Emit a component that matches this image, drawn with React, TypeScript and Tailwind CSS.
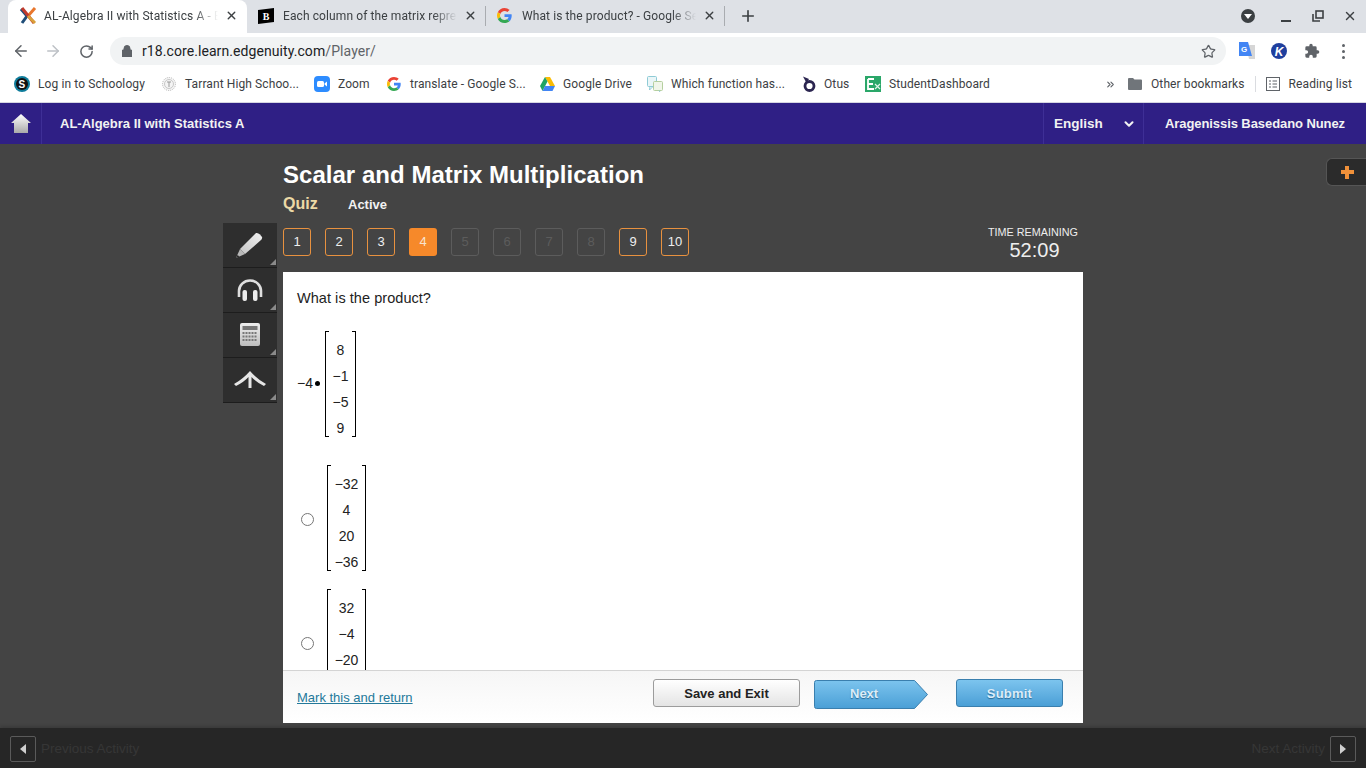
import React from 'react';
import { ArrowLeft, ArrowRight, RotateCw, Star, Plus, X, ChevronDown, ChevronsRight } from 'lucide-react';

const sans = "font-['Liberation_Sans',Arial,sans-serif]";

function EdgenuityIcon() {
  return (
    <svg width="18" height="18" viewBox="0 0 18 18">
      <path d="M2 2 L8 9 L3 16" fill="none" stroke="#1f4e79" strokeWidth="3" />
      <path d="M16 1 L9 9" fill="none" stroke="#e8762c" strokeWidth="3" />
      <path d="M3 1 L15 16" fill="none" stroke="#c0392b" strokeWidth="3" />
      <path d="M9 9 L16 16" fill="none" stroke="#d9a03a" strokeWidth="3" />
    </svg>
  );
}

function BrainlyIcon() {
  return (
    <svg width="16" height="16" viewBox="0 0 16 16">
      <path d="M0 2 L16 0 V14 L0 16 Z" fill="#000" />
      <text x="8" y="12" textAnchor="middle" fontSize="10" fontWeight="700" fill="#fff" fontFamily="Liberation Serif">B</text>
    </svg>
  );
}

function GoogleIcon({ size = 14 }: { size?: number }) {
  return (
    <svg width={size} height={size} viewBox="0 0 48 48">
      <path fill="#EA4335" d="M24 9.5c3.5 0 6.7 1.2 9.2 3.6l6.9-6.9C35.9 2.4 30.4 0 24 0 14.6 0 6.5 5.4 2.6 13.2l8 6.2C12.5 13.7 17.8 9.5 24 9.5z" />
      <path fill="#4285F4" d="M47 24.5c0-1.6-.1-3.100-.4-4.500H24v9h13c-.6 3-2.200 5.500-4.800 7.200l7.700 6C44.400 37.700 47 31.700 47 24.500z" />
      <path fill="#FBBC05" d="M10.500 28.600c-.5-1.400-.8-3-.8-4.600s.3-3.200.8-4.600l-8-6.200C.9 16.500 0 20.100 0 24s.9 7.500 2.600 10.800l7.900-6.200z" />
      <path fill="#34A853" d="M24 48c6.500 0 11.900-2.100 15.900-5.800l-7.700-6c-2.200 1.400-4.900 2.300-8.200 2.300-6.200 0-11.500-4.200-13.400-9.900l-8 6.200C6.500 42.600 14.600 48 24 48z" />
    </svg>
  );
}

function SchoologyIcon() {
  return (
    <svg width="16" height="16" viewBox="0 0 16 16">
      <circle cx="8" cy="8" r="8" fill="#0e7c9b" />
      <circle cx="8" cy="8" r="6" fill="#111" />
      <text x="8" y="11.500" textAnchor="middle" fontSize="10" fontWeight="700" fill="#fff" fontFamily="Liberation Sans">S</text>
    </svg>
  );
}

function TarrantIcon() {
  return (
    <svg width="14" height="14" viewBox="0 0 14 14">
      <circle cx="7" cy="7" r="6.500" fill="#f4f4f4" stroke="#b5b5b5" strokeDasharray="1 1" />
      <circle cx="7" cy="7" r="4.500" fill="none" stroke="#c8c8c8" />
      <path d="M5 5 H9 M7 5 V10" stroke="#999" />
    </svg>
  );
}

function ZoomIcon() {
  return (
    <svg width="16" height="16" viewBox="0 0 16 16">
      <rect width="16" height="16" rx="4" fill="#2d8cff" />
      <rect x="3" y="5" width="7" height="6" rx="1.500" fill="#fff" />
      <path d="M10.500 7.500 L13 5.500 V10.500 L10.500 8.500 Z" fill="#fff" />
    </svg>
  );
}

function DriveIcon() {
  return (
    <svg width="15" height="14" viewBox="0 0 15 14">
      <path d="M5 0 H10 L15 9 H10 Z" fill="#fbbc04" />
      <path d="M5 0 L0 9 L2.500 14 L7.500 4.500 Z" fill="#1fa463" />
      <path d="M5 9 H15 L12.500 14 H2.500 Z" fill="#4285f4" />
    </svg>
  );
}

function WhichIcon() {
  return (
    <svg width="16" height="16" viewBox="0 0 16 16">
      <rect x="0.500" y="0.500" width="9" height="10" rx="1" fill="#eaf6f8" stroke="#8fcbd6" />
      <rect x="6.500" y="5.500" width="9" height="9" rx="1" fill="#f1f6ea" stroke="#b5cf9f" />
      <path d="M3 10.500 L2.500 14 L6 10.500 M12 14.500 L13 16" fill="none" stroke="#8fcbd6" />
    </svg>
  );
}

function OtusIcon() {
  return (
    <svg width="15" height="16" viewBox="0 0 15 16">
      <circle cx="8.500" cy="10" r="4.500" fill="none" stroke="#2b2550" strokeWidth="2.800" />
      <path d="M2 0.500 L8 3 L5.500 7 Z" fill="#2b2550" />
    </svg>
  );
}

function DashboardIcon() {
  return (
    <svg width="16" height="16" viewBox="0 0 16 16">
      <rect width="16" height="16" fill="#2aa769" />
      <path d="M3 3 H9 M3 3 V13 H9 M3 8 H8" fill="none" stroke="#fff" strokeWidth="1.800" />
      <path d="M10 8 L15 13 M15 8 L10 13" stroke="#dff3e8" strokeWidth="1.200" />
    </svg>
  );
}

function FolderIcon() {
  return (
    <svg width="14" height="12" viewBox="0 0 14 12">
      <path d="M0 1 Q0 0 1 0 H5 L6.500 1.500 H13 Q14 1.500 14 2.500 V11 Q14 12 13 12 H1 Q0 12 0 11 Z" fill="#70757a" />
    </svg>
  );
}

function ReadingIcon() {
  return (
    <svg width="14" height="14" viewBox="0 0 14 14" fill="none" stroke="#5f6368">
      <rect x="0.500" y="0.500" width="13" height="13" />
      <path d="M3 4 H5 M6.500 4 H11 M3 7 H5 M6.500 7 H11 M3 10 H5 M6.500 10 H11" />
    </svg>
  );
}

function TranslateIcon() {
  return (
    <svg width="16" height="18" viewBox="0 0 16 18">
      <path d="M7 3 H16 V17 H10 Z" fill="#d6d6d6" />
      <path d="M0 0 H9 L13 14 H0 Z" fill="#4285f4" />
      <text x="5" y="10" textAnchor="middle" fontSize="8" fontWeight="700" fill="#fff" fontFamily="Liberation Sans">G</text>
    </svg>
  );
}

function KamiIcon() {
  return (
    <svg width="16" height="16" viewBox="0 0 16 16">
      <circle cx="8" cy="8" r="8" fill="#1f3f9e" />
      <text x="8" y="12.500" textAnchor="middle" fontSize="12" fontWeight="700" fontStyle="italic" fill="#fff" fontFamily="Liberation Sans">K</text>
    </svg>
  );
}

function PuzzleIcon() {
  return (
    <svg width="16" height="16" viewBox="0 0 24 24" fill="#5f6368">
      <path d="M20.500 11H19V7a2 2 0 0 0-2-2h-4V3.500a2.500 2.500 0 0 0-5 0V5H4a2 2 0 0 0-2 2v3.800h1.500a2.700 2.700 0 0 1 0 5.400H2V20a2 2 0 0 0 2 2h3.800v-1.500a2.700 2.700 0 0 1 5.400 0V22H17a2 2 0 0 0 2-2v-4h1.500a2.500 2.500 0 0 0 0-5z" />
    </svg>
  );
}

function RestoreIcon() {
  return (
    <svg width="12" height="12" viewBox="0 0 12 12" fill="none" stroke="#3c4043" strokeWidth="1.600">
      <rect x="4" y="1" width="7" height="7" />
      <path d="M1 4 V11 H8" />
    </svg>
  );
}

function PencilIcon() {
  return (
    <svg width="28" height="27" viewBox="0 0 28 27">
      <defs>
        <linearGradient id="pencilFill" x1="1" y1="0" x2="0" y2="1">
          <stop offset="0" stopColor="#f2f2f2" />
          <stop offset="1" stopColor="#c4c4c4" />
        </linearGradient>
      </defs>
      <path d="M21 1 Q23 0.500 25 2.500 L27 5 Q27.500 6.500 26 8 L10 22 L5 17 Z" fill="url(#pencilFill)" />
      <path d="M5 17 L10 22 L1 26 Z" fill="#b8b8b8" />
      <path d="M2.500 23 L1 26 L4.500 24.500 Z" fill="#2a2a2a" />
    </svg>
  );
}

function HeadphonesIcon() {
  return (
    <svg width="26" height="23" viewBox="0 0 26 23">
      <path d="M2 18 V12 A11 10.500 0 0 1 24 12 V18" fill="none" stroke="#dedede" strokeWidth="2.600" />
      <rect x="5.500" y="11" width="4.500" height="11" rx="2" fill="#ececec" />
      <rect x="16" y="11" width="4.500" height="11" rx="2" fill="#ececec" />
    </svg>
  );
}

function CalculatorIcon() {
  return (
    <svg width="20" height="24" viewBox="0 0 20 24">
      <defs>
        <linearGradient id="calcFill" x1="0" y1="0" x2="0" y2="1">
          <stop offset="0" stopColor="#efefef" />
          <stop offset="1" stopColor="#bdbdbd" />
        </linearGradient>
      </defs>
      <rect width="20" height="23" rx="2" fill="url(#calcFill)" />
      <rect x="2.500" y="3" width="15" height="4" fill="#777" />
      <path d="M2.500 10 H17.500 M2.500 13.500 H17.500 M2.500 17 H17.500" stroke="#777" strokeWidth="2" strokeDasharray="2 1" />
    </svg>
  );
}

function AnnotateIcon() {
  return (
    <svg width="34" height="20" viewBox="0 0 34 20">
      <path d="M1 15 Q10 10 17 2 Q24 10 33 15 L31 17 Q23 13 18.500 8 V19 H15.500 V8 Q11 13 3 17 Z" fill="#e6e6e6" />
    </svg>
  );
}

function HomeIcon() {
  return (
    <svg width="20" height="19" viewBox="0 0 20 19">
      <defs>
        <linearGradient id="homeFill" x1="0" y1="0" x2="0" y2="1">
          <stop offset="0" stopColor="#ffffff" />
          <stop offset="1" stopColor="#a9a9a9" />
        </linearGradient>
      </defs>
      <path d="M10 0 L20 9 H17 V19 H3 V9 H0 Z" fill="url(#homeFill)" />
    </svg>
  );
}

function Tab({ icon, title, active }: { icon: React.ReactNode; title: string; active?: boolean }) {
  return (
    <div className={`relative flex h-[33px] w-[239px] shrink-0 items-center pb-[2px] pl-[11px] pr-[9px] ${active ? 'rounded-t-lg bg-white' : ''}`}>
      <span className="flex w-[25px] shrink-0 items-center">{icon}</span>
      <span className="w-[174px] overflow-hidden whitespace-nowrap text-xs tracking-[0.1px] text-[#3c4043] [mask-image:linear-gradient(to_right,black_150px,transparent_174px)]">{title}</span>
      <X size={13} strokeWidth={2.5} className="ml-auto text-[#3c4043]" />
      {!active && <span className="absolute right-0 top-[6px] h-[20px] w-px bg-[#a9acb0]" />}
    </div>
  );
}

const bookmarks = [
  { w: 'w-[148px]', icon: <SchoologyIcon />, label: 'Log in to Schoology', gap: 'gap-2' },
  { w: 'w-[152px]', icon: <TarrantIcon />, label: 'Tarrant High Schoo...', gap: 'gap-[9px]' },
  { w: 'w-[73px]', icon: <ZoomIcon />, label: 'Zoom', gap: 'gap-2' },
  { w: 'w-[153px]', icon: <GoogleIcon />, label: 'translate - Google S...', gap: 'gap-[9px]' },
  { w: 'w-[107px]', icon: <DriveIcon />, label: 'Google Drive', gap: 'gap-2' },
  { w: 'w-[154px]', icon: <WhichIcon />, label: 'Which function has...', gap: 'gap-2' },
  { w: 'w-[64px]', icon: <OtusIcon />, label: 'Otus', gap: 'gap-2' },
  { w: 'w-[135px]', icon: <DashboardIcon />, label: 'StudentDashboard', gap: 'gap-2' },
];

function BrowserChrome() {
  return (
    <div className="font-['Roboto',sans-serif]">
      <div className="flex h-[33px] items-center bg-[#dee1e6] pl-2">
        <Tab active icon={<EdgenuityIcon />} title="AL-Algebra II with Statistics A - Edgenuity" />
        <Tab icon={<BrainlyIcon />} title="Each column of the matrix represents" />
        <Tab icon={<GoogleIcon size={15} />} title="What is the product? - Google Search" />
        <Plus size={18} strokeWidth={2.2} className="mb-[2px] ml-[14px] text-[#3c4043]" />
        <div className="ml-auto flex items-center pb-px pr-[9px]">
          <span className="mr-[26px] flex h-[14px] w-[14px] items-center justify-center rounded-full bg-[#3c4043]">
            <span className="mt-px h-0 w-0 border-x-[4px] border-t-[5px] border-x-transparent border-t-white" />
          </span>
          <span className="mr-[21px] mt-[9px] h-[2px] w-[10px] bg-[#3c4043]" />
          <span className="mr-[19px]"><RestoreIcon /></span>
          <X size={14} strokeWidth={2.5} className="text-[#3c4043]" />
        </div>
      </div>
      <div className="flex h-[36px] items-center bg-white">
        <ArrowLeft size={18} strokeWidth={2} className="ml-[12px] text-[#5f6368]" />
        <ArrowRight size={18} strokeWidth={2} className="ml-[14px] text-[#bdc1c6]" />
        <RotateCw size={15} strokeWidth={2.4} className="ml-[17px] text-[#5f6368]" />
        <div className="ml-[16px] flex h-[28px] w-[1116px] items-center rounded-full bg-[#f1f3f4] pl-[12px] pr-[10px]">
          <svg width="10" height="12" viewBox="0 0 10 12">
            <path d="M2 5 V3.500 a3 3 0 0 1 6 0 V5 M0.500 5 H9.500 V12 H0.500 Z" fill="#5f6368" stroke="#5f6368" />
          </svg>
          <span className="ml-[10px] text-sm tracking-[0.08px] text-[#202124]">r18.core.learn.edgenuity.com<span className="text-[#5f6368]">/Player/</span></span>
          <Star size={15} strokeWidth={2} className="ml-auto text-[#5f6368]" />
        </div>
        <div className="ml-[13px] flex items-center">
          <TranslateIcon />
          <span className="ml-[16px]"><KamiIcon /></span>
          <span className="ml-[17px]"><PuzzleIcon /></span>
          <span className="ml-[22px] flex flex-col gap-[3px]">
            <span className="h-[3px] w-[3px] rounded-full bg-[#5f6368]" />
            <span className="h-[3px] w-[3px] rounded-full bg-[#5f6368]" />
            <span className="h-[3px] w-[3px] rounded-full bg-[#5f6368]" />
          </span>
        </div>
      </div>
      <div className="flex h-[34px] items-center border-b border-[#d6d6e2] bg-white pb-[3px] pl-[14px] text-xs tracking-[0.1px] text-[#3c4043]">
        {bookmarks.map((b) => (
          <div key={b.label} className={`flex shrink-0 items-center ${b.w} ${b.gap}`}>
            {b.icon}
            <span className="whitespace-nowrap">{b.label}</span>
          </div>
        ))}
        <ChevronsRight size={11} strokeWidth={2.5} className="ml-[105px] text-[#5f6368]" />
        <span className="ml-[12px]"><FolderIcon /></span>
        <span className="ml-[9px] whitespace-nowrap">Other bookmarks</span>
        <span className="ml-[10px] h-[16px] w-px bg-[#dadce0]" />
        <span className="ml-[10px]"><ReadingIcon /></span>
        <span className="ml-[9px] whitespace-nowrap">Reading list</span>
      </div>
    </div>
  );
}

function SiteNav() {
  return (
    <div className={`flex h-[41px] items-center bg-[#2f1f85] text-[13px] font-bold text-[#f2f2f2] ${sans}`}>
      <div className="flex h-full w-[42px] items-center justify-center border-r border-[#3e2f96]">
        <HomeIcon />
      </div>
      <span className="ml-[18px]">AL-Algebra II with Statistics A</span>
      <div className="ml-auto flex h-full w-[101px] items-center justify-between border-x border-[#3e2f96] pl-[10px] pr-[7px] pt-px text-[13.500px]">
        English
        <ChevronDown size={14} strokeWidth={3.5} />
      </div>
      <span className="px-[21px] tracking-[-0.08px]">Aragenissis Basedano Nunez</span>
    </div>
  );
}

function ToolButton({ children }: { children: React.ReactNode }) {
  return (
    <div className="relative flex h-[45px] items-center justify-center border-b border-[#1d1d1d] bg-[#2e2e2e]">
      {children}
      <span className="absolute bottom-[2px] right-[1px] h-0 w-0 border-b-[6px] border-l-[6px] border-b-[#8a8a8a] border-l-transparent" />
    </div>
  );
}

const questions = ['1', '2', '3', '4', '5', '6', '7', '8', '9', '10'];

function QuestionNumber({ n }: { n: string }) {
  if (n === '4') {
    return <div className="flex h-[28px] w-[28px] items-center justify-center rounded-[3px] bg-[#f6892a] text-[13px] text-[#f8e3cf]">{n}</div>;
  }
  if (['5', '6', '7', '8'].includes(n)) {
    return <div className="flex h-[28px] w-[28px] items-center justify-center rounded-[3px] border border-[#5c5c5c] text-[13px] text-[#5c5c5c]">{n}</div>;
  }
  return <div className="flex h-[28px] w-[28px] items-center justify-center rounded-[3px] border border-[#e8913f] text-[13px] text-[#efefef]">{n}</div>;
}

function Matrix({ rows, className }: { rows: string[]; className: string }) {
  return (
    <div className={`flex h-[106px] shrink-0 ${className}`}>
      <span className="h-full w-[4px] border-y border-l border-black" />
      <div className="flex flex-1 flex-col items-center pt-[6px] text-sm leading-[26px] text-[#222]">
        {rows.map((r) => (
          <span key={r}>{r}</span>
        ))}
      </div>
      <span className="h-full w-[4px] border-y border-r border-black" />
    </div>
  );
}

function Answer({ rows, className }: { rows: string[]; className: string }) {
  return (
    <div className={`flex items-center pl-[18px] ${className}`}>
      <input type="radio" name="answer" className="m-0 mt-[2px] h-[13px] w-[13px] shrink-0" />
      <Matrix rows={rows} className="ml-[13px] w-[39px]" />
    </div>
  );
}

function QuestionCard() {
  return (
    <div className="flex h-[451px] flex-col bg-white">
      <div className="h-[398px] overflow-hidden">
        <p className="pl-[14px] pt-[18px] text-[14.500px] leading-4 tracking-[0.05px] text-[#222]">What is the product?</p>
        <div className="mt-[25px] flex items-center pl-[14px] text-sm text-[#222]">
          <span className="mb-[2px] w-[16px]">−4</span>
          <span className="mb-[2px] ml-[2px] h-[5px] w-[5px] rounded-full bg-black" />
          <Matrix rows={['8', '−1', '−5', '9']} className="ml-[5px] w-[31px]" />
        </div>
        <Answer rows={['−32', '4', '20', '−36']} className="mt-[28px]" />
        <Answer rows={['32', '−4', '−20', '36']} className="mt-[18px]" />
      </div>
      <div className="flex h-[53px] items-start border-t border-[#d4d4d4] bg-gradient-to-b from-[#f6f6f6] to-white pl-[14px] pr-[20px] pt-[8px]">
        <a className="mt-[9px] text-[13px] text-[#24799a] underline">Mark this and return</a>
        <button className="ml-auto h-[28px] w-[147px] rounded-[3px] border border-[#9c9c9c] bg-gradient-to-b from-white to-[#e4e4e4] pt-[2px] text-[13px] font-bold text-[#222]">Save and Exit</button>
        <div className="relative ml-[14px] mt-px h-[29px] w-[114px]">
          <svg width="114" height="29" viewBox="0 0 114 29" className="absolute inset-0">
            <defs>
              <linearGradient id="nextFill" x1="0" y1="0" x2="0" y2="1">
                <stop offset="0" stopColor="#7cc4ee" />
                <stop offset="1" stopColor="#4a9fd6" />
              </linearGradient>
            </defs>
            <path d="M2.500 0.500 H100.500 L113.500 14.500 L100.500 28.500 H2.500 Q0.500 28.500 0.500 26.500 V2.500 Q0.500 0.500 2.500 0.500 Z" fill="url(#nextFill)" stroke="#3a7fae" />
          </svg>
          <span className="absolute left-[36px] top-[4px] text-[13px] font-bold text-[#dcedf8] [text-shadow:0_1px_1px_#2a6a96]">Next</span>
        </div>
        <button className="ml-[28px] h-[28px] w-[107px] rounded-[3px] border border-[#3a7fae] bg-gradient-to-b from-[#7cc4ee] to-[#4a9fd6] pt-[2px] text-[13px] font-bold tracking-[0.2px] text-[#dcedf8] [text-shadow:0_1px_1px_#2a6a96]">Submit</button>
      </div>
    </div>
  );
}

export default function App() {
  return (
    <div className={`flex h-[768px] w-[1366px] flex-col overflow-hidden bg-[#444444] ${sans}`}>
      <BrowserChrome />
      <SiteNav />
      <main className="relative flex flex-1 pl-[223px]">
        {/* tools column */}
        <div className="mt-[79px] w-[54px] shrink-0 self-start">
          <ToolButton><span className="-ml-[2px]"><PencilIcon /></span></ToolButton>
          <ToolButton><HeadphonesIcon /></ToolButton>
          <ToolButton><CalculatorIcon /></ToolButton>
          <ToolButton><span className="-mt-[3px]"><AnnotateIcon /></span></ToolButton>
        </div>

        <div className="ml-[6px] w-[800px]">
          <h1 className="mt-[17px] text-2xl font-bold leading-7 tracking-[0.03px] text-white">Scalar and Matrix Multiplication</h1>
          <div className="mt-[3px] flex items-center">
            <span className="w-[65px] text-base font-bold leading-6 text-[#ecd9a6]">Quiz</span>
            <span className="mt-px text-[13px] font-bold text-[#f2f2f2]">Active</span>
          </div>
          <div className="flex h-[56px] items-start justify-between">
            <div className="mt-[12px] flex gap-[14px]">
              {questions.map((n) => (
                <QuestionNumber key={n} n={n} />
              ))}
            </div>
            <div className="mr-[5px] mt-[10px] flex flex-col items-center text-[#eeeeee]">
              <span className="text-[10.800px] leading-[13px]">TIME REMAINING</span>
              <span className="pl-[3px] text-xl leading-[22px]">52:09</span>
            </div>
          </div>
          <QuestionCard />
        </div>

        {/* expand tab on the right edge */}
        <div className="absolute right-0 top-[14px] flex h-[28px] w-[40px] items-center justify-center rounded-l-[6px] border border-r-0 border-[#555] bg-[#2b2b2b] pl-px">
          <span className="relative h-[13px] w-[13px]">
            <span className="absolute left-[4.500px] top-0 h-[13px] w-[4px] bg-[#f0913a]" />
            <span className="absolute left-0 top-[4.500px] h-[4px] w-[13px] bg-[#f0913a]" />
          </span>
        </div>
      </main>

      <footer className="flex h-[40px] items-center justify-between bg-[#262626] px-[10px] pt-px text-[13.500px] text-[#363636] [box-shadow:0_-2px_3px_rgba(0,0,0,0.15)]">
        <div className="flex items-center gap-[5px]">
          <span className="flex h-[26px] w-[26px] items-center justify-center rounded-[2px] border border-[#5a5a5a]">
            <span className="h-0 w-0 border-y-[5px] border-r-[6px] border-y-transparent border-r-[#cfcfcf]" />
          </span>
          <span className="mt-px">Previous Activity</span>
        </div>
        <div className="flex items-center gap-[5px]">
          <span className="mt-px">Next Activity</span>
          <span className="flex h-[26px] w-[26px] items-center justify-center rounded-[2px] border border-[#5a5a5a]">
            <span className="h-0 w-0 border-y-[5px] border-l-[6px] border-y-transparent border-l-[#cfcfcf]" />
          </span>
        </div>
      </footer>
    </div>
  );
}
